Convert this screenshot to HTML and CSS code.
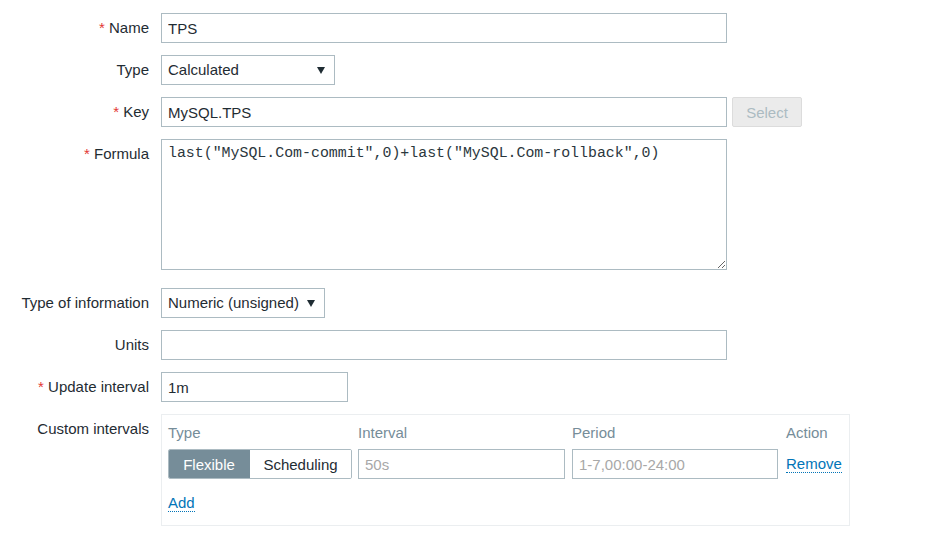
FILE: index.html
```html
<!DOCTYPE html>
<html>
<head>
<meta charset="utf-8">
<link rel="stylesheet" href="styles.css">
</head>
<body>
<form class="form">
  <div class="row">
    <label class="label"><span class="req">*</span> Name</label>
    <div class="field"><input class="input w-full" type="text" value="TPS"></div>
  </div>
  <div class="row">
    <label class="label">Type</label>
    <div class="field">
      <div class="select w-type"><span>Calculated</span><i class="arrow"></i></div>
    </div>
  </div>
  <div class="row">
    <label class="label"><span class="req">*</span> Key</label>
    <div class="field field-inline">
      <input class="input w-full" type="text" value="MySQL.TPS">
      <button type="button" class="btn-disabled" disabled>Select</button>
    </div>
  </div>
  <div class="row row-tall">
    <label class="label"><span class="req">*</span> Formula</label>
    <div class="field"><textarea class="textarea w-full">last("MySQL.Com-commit",0)+last("MySQL.Com-rollback",0)</textarea></div>
  </div>
  <div class="row">
    <label class="label">Type of information</label>
    <div class="field">
      <div class="select w-info"><span>Numeric (unsigned)</span><i class="arrow"></i></div>
    </div>
  </div>
  <div class="row">
    <label class="label">Units</label>
    <div class="field"><input class="input w-full" type="text" value=""></div>
  </div>
  <div class="row">
    <label class="label"><span class="req">*</span> Update interval</label>
    <div class="field"><input class="input w-interval" type="text" value="1m"></div>
  </div>
  <div class="row">
    <label class="label">Custom intervals</label>
    <div class="field">
      <div class="intervals">
        <div class="int-grid">
          <div class="th">Type</div>
          <div class="th">Interval</div>
          <div class="th col-period">Period</div>
          <div class="th col-action">Action</div>
          <div class="seg">
            <span class="seg-item seg-on">Flexible</span>
            <span class="seg-item">Scheduling</span>
          </div>
          <input class="input w-cell" type="text" placeholder="50s">
          <input class="input w-cell col-period" type="text" placeholder="1-7,00:00-24:00">
          <a class="link col-action" href="#">Remove</a>
        </div>
        <div class="add-row"><a class="link" href="#">Add</a></div>
      </div>
    </div>
  </div>
</form>
</body>
</html>
```
FILE: styles.css
```css
* { box-sizing: border-box; }
html, body {
  margin: 0;
  padding: 0;
  background: #ffffff;
}
body {
  font-family: "Liberation Sans", Arial, sans-serif;
  font-size: 15px;
  color: #1f2c33;
}
.form {
  padding-top: 13px;
  display: flex;
  flex-direction: column;
  gap: 12px;
}
.row {
  display: grid;
  grid-template-columns: 149px 1fr;
  column-gap: 12px;
  align-items: start;
}
.row-tall { margin-bottom: 6px; }
.label {
  text-align: right;
  line-height: 30px;
  white-space: nowrap;
}
.req {
  color: #e33734;
}
.field { display: block; }
.field-inline {
  display: flex;
  gap: 5px;
  align-items: center;
}
.input {
  height: 30px;
  border: 1px solid #acbbc2;
  background: #fff;
  padding: 0 6px;
  font-family: "Liberation Sans", Arial, sans-serif;
  font-size: 15px;
  color: #1f2c33;
  outline: none;
  border-radius: 0;
  display: block;
}
.input::placeholder { color: #a8a8a8; }
.w-full { width: 566px; }
.w-interval { width: 187px; }
.w-type { width: 174px; }
.w-info { width: 164px; }
.select {
  height: 30px;
  border: 1px solid #acbbc2;
  padding: 0 6px;
  display: flex;
  align-items: center;
  justify-content: space-between;
  line-height: 28px;
  background: #fff;
}
.arrow {
  display: block;
  width: 0;
  height: 0;
  border-left: 4px solid transparent;
  border-right: 4px solid transparent;
  border-top: 7px solid #1f2c33;
  margin-right: 3px;
}
.btn-disabled {
  width: 70px;
  height: 30px;
  border: 1px solid #dcdcdc;
  background: #ebebeb;
  color: #acbbc2;
  border-radius: 2px;
  font-family: "Liberation Sans", Arial, sans-serif;
  font-size: 15px;
  padding: 0;
}
.textarea {
  display: block;
  height: 131px;
  border: 1px solid #acbbc2;
  padding: 5px 6px;
  font-family: "Liberation Mono", "Courier New", monospace;
  font-size: 14.9px;
  line-height: 17px;
  color: #2b373d;
  resize: both;
  outline: none;
}
.intervals {
  width: 689px;
  border: 1px solid #ebeef0;
  padding: 6px 7px 10px 6px;
}
.int-grid {
  display: grid;
  grid-template-columns: 184px 207px 207px auto;
  column-gap: 6px;
  row-gap: 4px;
  align-items: center;
}
.th {
  color: #768d99;
  line-height: 24px;
}
.col-period { margin-left: 1px; }
input.col-period { width: 206px; }
.col-action { margin-left: 2px; }
.seg {
  display: flex;
  height: 30px;
  width: 184px;
  border: 1px solid #acbbc2;
  border-radius: 2px;
  overflow: hidden;
}
.seg-item {
  flex: 1 1 auto;
  display: flex;
  align-items: center;
  justify-content: center;
  color: #1f2c33;
  background: #fff;
}
.seg-on {
  flex: 0 0 82px;
  background: #768d99;
  color: #fff;
  margin: -1px 0 -1px -1px;
}
.w-cell { width: 100%; }
.link {
  color: #0275b8;
  text-decoration: none;
  border-bottom: 1px dotted #0275b8;
  line-height: 16px;
  justify-self: start;
}
.add-row {
  margin-top: 12px;
  line-height: 24px;
}
```
